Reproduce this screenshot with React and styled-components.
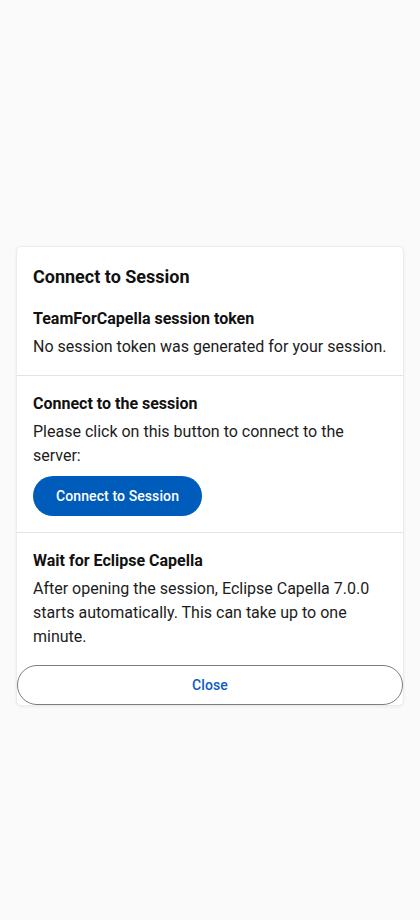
import React from 'react'
import styled, { createGlobalStyle } from 'styled-components'

const GlobalStyle = createGlobalStyle`
  body {
    margin: 0;
    background: #fafafa;
    font-family: Roboto, 'Liberation Sans', sans-serif;
    color: #1a1a1a;
  }
`
const Page = styled.div`
  min-height: 920px;
  padding: 246px 16px 0;
  box-sizing: border-box;
`
const Dialog = styled.div`
  display: flex;
  flex-direction: column;
  background: #fff;
  border: 1px solid #ececec;
  border-radius: 5px;
  box-shadow: 0 1px 3px rgba(0, 0, 0, 0.06);
  overflow: hidden;
`
const Title = styled.h2`
  margin: 0 0 16px;
  font-size: 18px;
  line-height: 28px;
  font-weight: 700;
  color: #111;
`
const Section = styled.section`
  display: flex;
  flex-direction: column;
  align-items: flex-start;
  padding: 16px;
  border-bottom: ${(props) => (props.$last ? 'none' : '1px solid #e3e3e3')};
`
const Heading = styled.h3`
  margin: 0 0 4px;
  font-size: 16px;
  line-height: 24px;
  font-weight: 700;
  color: #111;
`
const Text = styled.p`
  margin: 0;
  font-size: 16px;
  line-height: 24px;
  color: #1c1c1c;
`
const PrimaryButton = styled.button`
  margin-top: 8px;
  height: 40px;
  padding: 0 23px;
  border: none;
  border-radius: 20px;
  background: #005cbb;
  color: #fff;
  font-family: inherit;
  font-size: 14px;
  font-weight: 500;
  letter-spacing: 0.1px;
`
const CloseButton = styled.button`
  height: 40px;
  width: 100%;
  border: 1px solid #7d7a82;
  border-radius: 20px;
  background: #fff;
  color: #0b5cc4;
  font-family: inherit;
  font-size: 14px;
  font-weight: 500;
  letter-spacing: 0.1px;
`

export default function App() {
  return (
    <Page>
      <GlobalStyle />
      <Dialog>
        <Section>
          <Title>Connect to Session</Title>
          <Heading>TeamForCapella session token</Heading>
          <Text>No session token was generated for your session.</Text>
        </Section>
        <Section>
          <Heading>Connect to the session</Heading>
          <Text>Please click on this button to connect to the server:</Text>
          <PrimaryButton>Connect to Session</PrimaryButton>
        </Section>
        <Section $last>
          <Heading>Wait for Eclipse Capella</Heading>
          <Text>
            After opening the session, Eclipse Capella 7.0.0 starts
            automatically. This can take up to one minute.
          </Text>
        </Section>
        <CloseButton>Close</CloseButton>
      </Dialog>
    </Page>
  )
}
